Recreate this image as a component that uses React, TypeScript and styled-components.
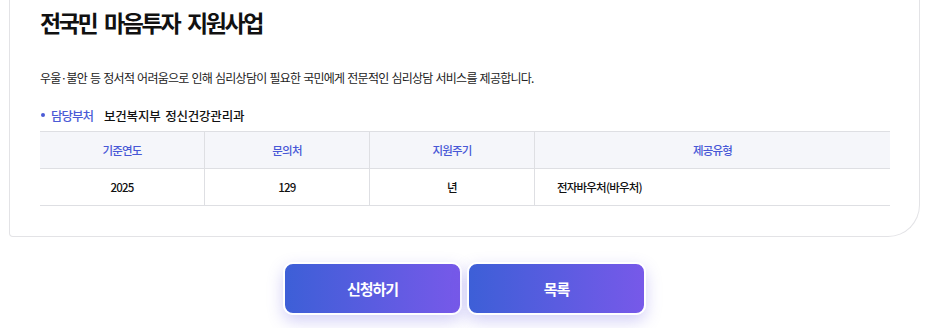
import styled, { createGlobalStyle } from 'styled-components';

const GlobalStyle = createGlobalStyle`
  body {
    margin: 0;
    background: #ffffff;
    font-family: 'Noto Sans CJK KR', 'Noto Sans', sans-serif;
    color: #111111;
  }
`;

const Page = styled.div`
  padding: 0 10px 0 9px;
`;

const Card = styled.section`
  border: 1px solid #e3e3e6;
  border-top: none;
  border-radius: 0 0 32px 4px;
  padding: 8px 29px 30px 30px;
`;

const Title = styled.h2`
  margin: 0;
  font-size: 23px;
  line-height: 28px;
  font-weight: 700;
  letter-spacing: -2.4px;
  word-spacing: 5px;
  color: #111111;
`;

const Description = styled.p`
  margin: 33px 0 0;
  font-size: 12px;
  line-height: 18px;
  letter-spacing: -0.75px;
  word-spacing: 1px;
  color: #222222;
`;

const DeptRow = styled.div`
  display: flex;
  align-items: center;
  margin-top: 19px;
  height: 18px;
  font-size: 12.5px;
  font-weight: 500;
  letter-spacing: -1px;
`;

const DeptLabel = styled.span`
  display: flex;
  align-items: center;
  color: #4b5bd6;
  margin-right: 11px;

  &::before {
    content: '';
    width: 4px;
    height: 4px;
    border-radius: 50%;
    background: #4b5bd6;
    margin: 0 6px 0 1px;
  }
`;

const DeptValue = styled.span`
  color: #111111;
  letter-spacing: -0.2px;
  word-spacing: 2px;
`;

const Table = styled.table`
  width: 100%;
  margin-top: 7px;
  border-collapse: collapse;
  table-layout: fixed;
  font-size: 11.5px;
  letter-spacing: -0.8px;
`;

const HeadCell = styled.th<{ $width?: number }>`
  width: ${(p) => (p.$width ? `${p.$width}px` : 'auto')};
  height: 36px;
  padding: 0;
  background: #f5f6fa;
  color: #4858d6;
  font-weight: 500;
  border-top: 1px solid #dedfe3;
  border-bottom: 1px solid #dedfe3;
  border-left: 1px solid #dedfe3;

  &:first-child {
    border-left: none;
  }
`;

const Cell = styled.td<{ $align?: 'left' | 'center' }>`
  height: 36px;
  padding: ${(p) => (p.$align === 'left' ? '0 0 0 22px' : '0')};
  text-align: ${(p) => p.$align ?? 'center'};
  font-weight: 500;
  color: #111111;
  border-bottom: 1px solid #dedfe3;
  border-left: 1px solid #dedfe3;

  &:first-child {
    border-left: none;
  }
`;

const ButtonRow = styled.div`
  display: flex;
  justify-content: center;
  gap: 5px;
  margin-top: 25px;
  padding-bottom: 20px;
`;

const ActionButton = styled.button`
  width: 179px;
  height: 53px;
  border: 2px solid #ffffff;
  border-radius: 10px;
  background: linear-gradient(90deg, #3d5fd7 0%, #7759e9 100%);
  box-shadow: 0 6px 16px rgba(96, 86, 226, 0.28);
  color: #ffffff;
  font-family: 'Noto Sans CJK KR', 'Noto Sans', sans-serif;
  font-size: 15px;
  font-weight: 700;
  letter-spacing: -1px;
  cursor: pointer;
`;

function App() {
  return (
    <>
      <GlobalStyle />
      <Page>
        <Card>
          <Title>전국민 마음투자 지원사업</Title>
          <Description>
            우울·불안 등 정서적 어려움으로 인해 심리상담이 필요한 국민에게 전문적인 심리상담 서비스를
            제공합니다.
          </Description>
          <DeptRow>
            <DeptLabel>담당부처</DeptLabel>
            <DeptValue>보건복지부 정신건강관리과</DeptValue>
          </DeptRow>
          <Table>
            <thead>
              <tr>
                <HeadCell $width={164}>기준연도</HeadCell>
                <HeadCell $width={164}>문의처</HeadCell>
                <HeadCell $width={164}>지원주기</HeadCell>
                <HeadCell>제공유형</HeadCell>
              </tr>
            </thead>
            <tbody>
              <tr>
                <Cell>2025</Cell>
                <Cell>129</Cell>
                <Cell>년</Cell>
                <Cell $align="left">전자바우처(바우처)</Cell>
              </tr>
            </tbody>
          </Table>
        </Card>
        <ButtonRow>
          <ActionButton>신청하기</ActionButton>
          <ActionButton>목록</ActionButton>
        </ButtonRow>
      </Page>
    </>
  );
}

export default App;
